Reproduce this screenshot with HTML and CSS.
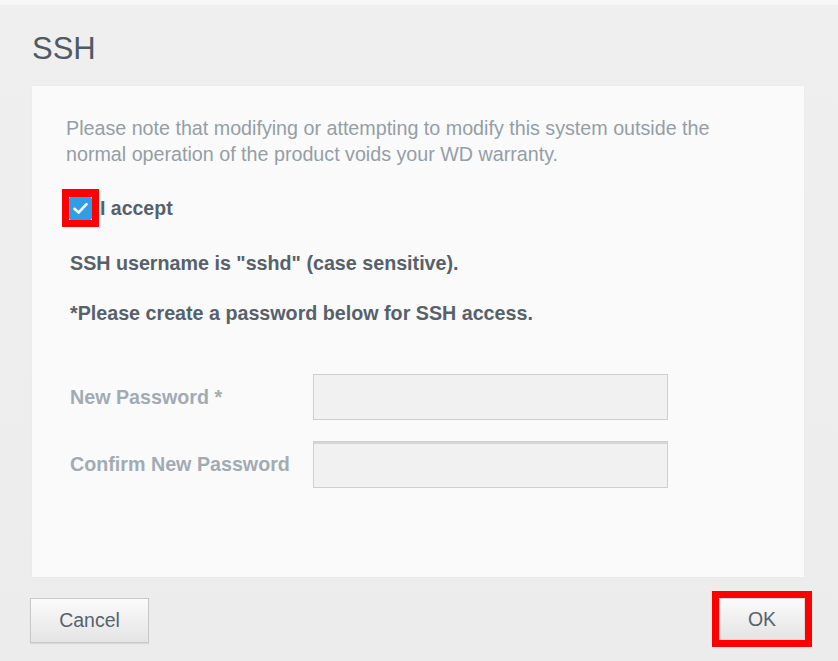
FILE: index.html
```html
<!DOCTYPE html>
<html>
<head>
<meta charset="utf-8">
<link rel="stylesheet" href="styles.css">
</head>
<body>
<div class="dialog">
  <h1 class="title">SSH</h1>
  <div class="panel">
    <p class="notice">Please note that modifying or attempting to modify this system outside the normal operation of the product voids your WD warranty.</p>
    <div class="accept-row">
      <span class="highlight">
        <span class="checkbox">
          <svg width="23" height="23" viewBox="0 0 23 23"><path d="M5.5 11.8 L9.6 15.6 L17.5 7.2" fill="none" stroke="#ffffff" stroke-width="2.6" stroke-linecap="round" stroke-linejoin="round"/></svg>
        </span>
      </span>
      <span class="accept-label">I accept</span>
    </div>
    <p class="info">SSH username is "sshd" (case sensitive).</p>
    <p class="info info-second">*Please create a password below for SSH access.</p>
    <div class="form-grid">
      <label class="field-label">New Password *</label>
      <div class="input"></div>
      <label class="field-label">Confirm New Password</label>
      <div class="input input-focus"></div>
    </div>
  </div>
  <div class="footer">
    <button class="btn btn-cancel">Cancel</button>
    <span class="highlight highlight-ok"><button class="btn btn-ok">OK</button></span>
  </div>
</div>
</body>
</html>
```

FILE: styles.css
```css
html, body {
  margin: 0;
  padding: 0;
}

body {
  width: 838px;
  height: 661px;
  background: #ededed;
  font-family: "Liberation Sans", Arial, sans-serif;
  overflow: hidden;
}

.dialog {
  width: 838px;
  height: 656px;
  border-top: 5px solid #f7f7f7;
  background: linear-gradient(#efefef, #ececec);
  display: flex;
  flex-direction: column;
}

.title {
  margin: 26px 0 0 32px;
  font-size: 31px;
  line-height: 36px;
  font-weight: normal;
  color: #4e5a64;
}

.panel {
  margin: 19px 0 0 32px;
  width: 772px;
  height: 491px;
  flex: none;
  box-sizing: border-box;
  padding: 29px 34px 0 34px;
  background: #fafafa;
  box-shadow: 0 0 2px rgba(0, 0, 0, 0.03);
}

.notice {
  margin: 0;
  max-width: 680px;
  font-size: 19.7px;
  line-height: 26px;
  color: #949ea6;
}

.accept-row {
  display: flex;
  align-items: center;
  margin: 22px 0 0 -4px;
  height: 38px;
}

.highlight {
  display: inline-flex;
  border: 7px solid #ff0000;
}

.accept-row .highlight {
  border-width: 8px 7px 7px 7px;
}

.checkbox {
  width: 23px;
  height: 23px;
  border-radius: 2px;
  background: #2e9ee9;
  display: flex;
}

.accept-label {
  margin-left: 1px;
  font-size: 19.5px;
  font-weight: bold;
  color: #56616a;
}

.info {
  margin: 23px 0 0 4px;
  font-size: 19.7px;
  line-height: 26px;
  font-weight: bold;
  color: #56616a;
}

.info-second {
  margin-top: 24px;
}

.form-grid {
  margin: 48px 0 0 4px;
  display: grid;
  grid-template-columns: 243px 355px;
  grid-auto-rows: 46px;
  row-gap: 21px;
  align-items: center;
}

.field-label {
  font-size: 19.7px;
  font-weight: bold;
  color: #a2abb2;
}

.input {
  height: 46px;
  box-sizing: border-box;
  border: 1px solid #cfcfcf;
  background: #f1f1f1;
}

.input-focus {
  height: 47px;
  box-shadow: inset 0 2px 0 #d6d6d6;
}

.footer {
  flex: 1;
  display: flex;
  justify-content: space-between;
  align-items: center;
  padding: 0 26px 0 30px;
}

.btn {
  font-family: "Liberation Sans", Arial, sans-serif;
  font-size: 19.5px;
  color: #56626c;
  border: 1px solid #c9c9c9;
  background: linear-gradient(#fbfbfb, #e4e4e4);
  box-sizing: border-box;
  padding: 0;
  margin: 0;
}

.btn-cancel {
  width: 119px;
  height: 45px;
  margin-top: 2px;
  box-shadow: 0 1px 1px rgba(0, 0, 0, 0.08);
}

.btn-ok {
  width: 86px;
  height: 42px;
  border-color: #d9d9d9;
}
```
